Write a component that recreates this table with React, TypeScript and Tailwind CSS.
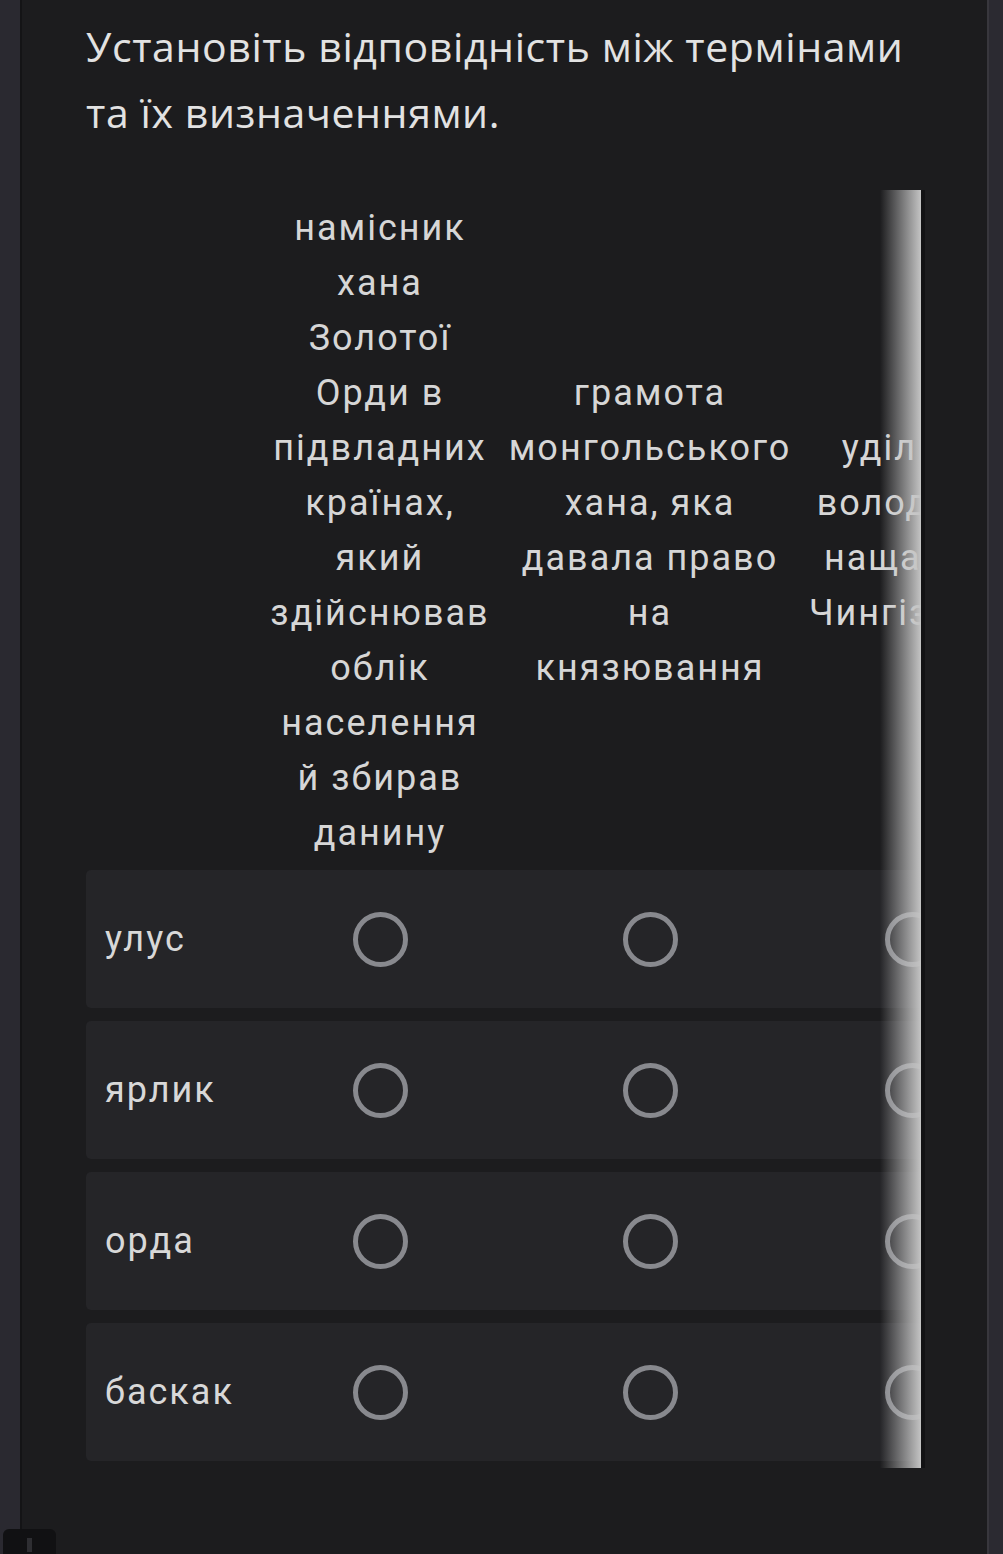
import React, { useState } from "react";

const terms = ["улус", "ярлик", "орда", "баскак"];

// header lines are kept as in the form (wrapped per column)
const columns = [
  {
    id: "baskak",
    width: "w-[230px]",
    lines: ["намісник", "хана", "Золотої", "Орди в", "підвладних", "країнах,", "який", "здійснював", "облік", "населення", "й збирав", "данину"],
  },
  {
    id: "yarlyk",
    width: "w-[310px]",
    lines: ["грамота", "монгольського", "хана, яка", "давала право", "на", "князювання"],
  },
  {
    id: "ulus",
    width: "w-[214px]",
    lines: ["удільне", "володіння", "нащадків", "Чингізхана"],
  },
  {
    id: "orda",
    width: "w-[230px]",
    lines: ["ставка", "хана"],
  },
];

function Radio({ checked, onClick }: { checked: boolean; onClick: () => void }) {
  return (
    <button
      type="button"
      onClick={onClick}
      className="w-[55px] h-[55px] rounded-full border-[5px] border-[#88898e] flex items-center justify-center"
    >
      {checked && <span className="w-[25px] h-[25px] rounded-full bg-[#a8c7fa]" />}
    </button>
  );
}

export default function App() {
  const [answers, setAnswers] = useState<Record<string, string>>({});

  return (
    <div
      className="relative flex min-h-[1554px] bg-[#1c1c1e] text-[#d6d6d6]"
      style={{ fontFamily: "Roboto, 'Liberation Sans', sans-serif" }}
    >
      <div className="w-[22px] shrink-0 bg-[#2a2930] border-r-2 border-[#141416]" />

      <main className="flex-1 pl-[64px] pt-[13px]">
        <h1
          className="text-[41px] leading-[66px] tracking-[0.6px] text-[#e2e2e2]"
          style={{ fontFamily: "'Open Sans', sans-serif" }}
        >
          Установіть відповідність між термінами
          <br />
          та їх визначеннями.
        </h1>

        <div className="mt-[45px] w-[839px] border-r-4 border-[#121214]">
          <div className="relative w-[835px] overflow-hidden pt-[11px] pb-[7px]">
            <div className="flex items-center w-max text-[36px] leading-[55px] tracking-[2px] text-center">
              <div className="w-[179px] shrink-0" />
              {columns.map((c) => (
                <div key={c.id} className={`${c.width} shrink-0 whitespace-nowrap`}>
                  {c.lines.map((l) => (
                    <div key={l}>{l}</div>
                  ))}
                </div>
              ))}
            </div>

            <div className="mt-[9px] flex flex-col gap-[13px] w-max">
              {terms.map((t) => (
                <div key={t} className="flex items-center h-[138px] rounded-[5px] bg-[#252528]">
                  <div className="w-[179px] shrink-0 pl-[19px] text-[36px] tracking-[2px] text-[#d8d8d8]">{t}</div>
                  {columns.map((c) => (
                    <div key={c.id} className={`${c.width} shrink-0 flex justify-center`}>
                      <Radio
                        checked={answers[t] === c.id}
                        onClick={() => setAnswers({ ...answers, [t]: c.id })}
                      />
                    </div>
                  ))}
                </div>
              ))}
            </div>

            <div className="absolute right-0 top-0 bottom-0 w-[41px] bg-gradient-to-r from-[#1c1c1e]/0 to-[#c4c4c4]" />
          </div>
        </div>
      </main>

      <div className="w-[16px] shrink-0 bg-[#2b2a31] border-l-2 border-[#38373d]" />

      <div className="absolute left-[3px] bottom-0 w-[53px] h-[25px] rounded-t-md bg-[#111113]">
        <div className="absolute left-[24px] top-[9px] w-[5px] h-[14px] bg-[#2e2e32]" />
      </div>
    </div>
  );
}
